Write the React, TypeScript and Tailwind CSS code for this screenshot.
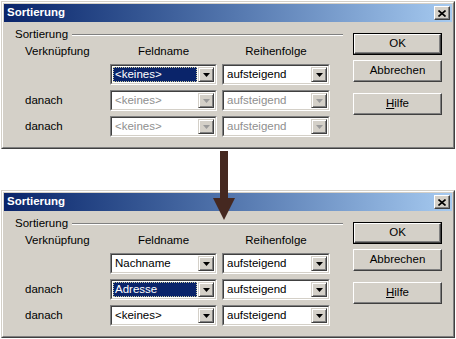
const FONT = "font-['Liberation_Sans',Arial,sans-serif]";

type Row = { label: string; field: string; selected?: boolean; disabled?: boolean };

const BEFORE: Row[] = [
  { label: "", field: "<keines>", selected: true },
  { label: "danach", field: "<keines>", disabled: true },
  { label: "danach", field: "<keines>", disabled: true },
];

const AFTER: Row[] = [
  { label: "", field: "Nachname" },
  { label: "danach", field: "Adresse", selected: true },
  { label: "danach", field: "<keines>" },
];

function DropButton({ disabled }: { disabled?: boolean }) {
  return (
    <div
      className="flex items-center justify-center w-[16px] h-full bg-[#d4d0c8] border border-t-[#d4d0c8] border-l-[#d4d0c8]
        border-r-[#404040] border-b-[#404040] shadow-[inset_1px_1px_#fff,inset_-1px_-1px_#808080]"
    >
      <svg width="7" height="4" viewBox="0 0 7 4">
        <polygon points="0,0 7,0 3.5,4" fill={disabled ? "#9a9a9a" : "#000"} />
      </svg>
    </div>
  );
}

function Combo({ value, selected, disabled, className }: { value: string; selected?: boolean; disabled?: boolean; className: string }) {
  return (
    <div className={`h-[21px] flex border border-t-[#808080] border-l-[#808080] border-b-white border-r-white ${className}`}>
      <div className="flex flex-1 min-w-0 bg-white border border-t-[#404040] border-l-[#404040] border-b-[#d4d0c8] border-r-[#d4d0c8] p-[1px] gap-[1px]">
        <div
          className={
            selected
              ? "flex-1 flex items-center pl-[1px] bg-[#0a246a] text-white border border-dotted border-[#c8c8a0]"
              : `flex-1 flex items-center pl-[2px] ${disabled ? "text-[#8f8f8f]" : "text-black"}`
          }
        >
          {value}
        </div>
        <DropButton disabled={disabled} />
      </div>
    </div>
  );
}

function Button({ children, primary }: { children: React.ReactNode; primary?: boolean }) {
  return (
    <div className={`h-[22px] w-[89px] ${primary ? "border border-black" : ""}`}>
      <div
        className="h-full flex items-center justify-center bg-[#d4d0c8] border border-t-white border-l-white border-r-[#404040]
          border-b-[#404040] shadow-[inset_-1px_-1px_#808080]"
      >
        {children}
      </div>
    </div>
  );
}

function Dialog({ rows }: { rows: Row[] }) {
  return (
    <div className="w-[454px] h-[148px] border border-t-[#d4d0c8] border-l-[#d4d0c8] border-r-[#404040] border-b-[#404040]">
      <div className="h-full bg-[#d4d0c8] border border-t-white border-l-white border-r-[#808080] border-b-[#808080] flex flex-col">
        {/* Title bar */}
        <div className="h-[18px] mx-[1px] mt-[1px] flex items-center justify-between pl-[3px] pr-[2px] bg-gradient-to-r from-[#0a246a] to-[#a6caf0]">
          <span className="text-white font-bold text-[11.5px] leading-none">Sortierung</span>
          <div
            className="w-[16px] h-[14px] flex items-center justify-center bg-[#d4d0c8] border border-t-white border-l-white
              border-r-[#404040] border-b-[#404040] shadow-[inset_-1px_-1px_#808080]"
          >
            <svg width="8" height="7" viewBox="0 0 8 7">
              <path d="M0.5 0.5 L7.5 6.5 M7.5 0.5 L0.5 6.5" stroke="#000" strokeWidth="1.6" />
            </svg>
          </div>
        </div>

        {/* Body */}
        <div className="flex pl-[12px] gap-[10px] text-[11.5px] text-black">
          <div className="w-[328px] pt-[7px]">
            <div className="h-[12px] flex items-center gap-[4px]">
              <span className="leading-none">Sortierung</span>
              <div className="flex-1 border-t border-t-[#808080] border-b border-b-white" />
            </div>
            <div className="grid grid-cols-[90px_107px_108px] gap-x-[5px] gap-y-[5px] mt-[4px]">
              <div className="pl-[10px] h-[14px] flex items-center">Verknüpfung</div>
              <div className="h-[14px] flex items-center justify-center">Feldname</div>
              <div className="h-[14px] flex items-center justify-center">Reihenfolge</div>
              {rows.map((r, i) => (
                <div key={i} className="contents">
                  <div className="pl-[10px] h-[21px] flex items-center">{r.label}</div>
                  <Combo value={r.field} selected={r.selected} disabled={r.disabled} className="w-[107px]" />
                  <Combo value="aufsteigend" disabled={r.disabled} className="w-[108px]" />
                </div>
              ))}
            </div>
          </div>
          <div className="pt-[11px] flex flex-col">
            <Button primary>OK</Button>
            <div className="mt-[5px]">
              <Button>Abbrechen</Button>
            </div>
            <div className="mt-[11px]">
              <Button>
                <span>
                  <span className="underline">H</span>ilfe
                </span>
              </Button>
            </div>
          </div>
        </div>
      </div>
    </div>
  );
}

export default function App() {
  return (
    <div className={`relative w-[456px] h-[339px] bg-white pt-[1px] pl-[1px] ${FONT}`}>
      <Dialog rows={BEFORE} />
      <div className="mt-[41px]">
        <Dialog rows={AFTER} />
      </div>
      {/* Arrow between the two states */}
      <svg className="absolute left-[213px] top-[151px]" width="22" height="70" viewBox="0 0 22 70">
        <rect x="7" y="0" width="8" height="48" fill="#452820" />
        <polygon points="0,47 22,47 11,69" fill="#452820" />
      </svg>
    </div>
  );
}
